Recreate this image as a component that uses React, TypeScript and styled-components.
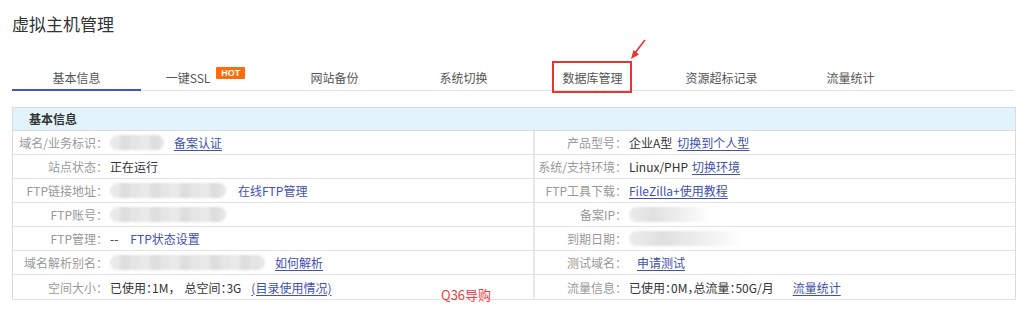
import React from 'react'
import styled, { createGlobalStyle } from 'styled-components'

const GlobalStyle = createGlobalStyle`
  html, body {
    margin: 0;
    padding: 0;
    background: #fff;
  }
  body {
    font-family: "Noto Sans CJK SC", "Liberation Sans", sans-serif;
    font-size: 12px;
    color: #333;
  }
`

type Value =
  | { kind: 'text'; text: string; gap?: number }
  | { kind: 'link'; text: string; underline?: boolean; gap?: number }
  | { kind: 'blur'; width: number; fade?: boolean; gap?: number }

type Row = {
  leftLabel: string
  left: Value[]
  rightLabel: string
  right: Value[]
}

const TABS = ['基本信息', '一键SSL', '网站备份', '系统切换', '数据库管理', '资源超标记录', '流量统计']

const ROWS: Row[] = [
  {
    leftLabel: '域名/业务标识：',
    left: [
      { kind: 'blur', width: 54 },
      { kind: 'link', text: '备案认证', underline: true, gap: 10 },
    ],
    rightLabel: '产品型号：',
    right: [
      { kind: 'text', text: '企业A型' },
      { kind: 'link', text: '切换到个人型', underline: true, gap: 5 },
    ],
  },
  {
    leftLabel: '站点状态：',
    left: [{ kind: 'text', text: '正在运行' }],
    rightLabel: '系统/支持环境：',
    right: [
      { kind: 'text', text: 'Linux/PHP' },
      { kind: 'link', text: '切换环境', underline: true, gap: 4 },
    ],
  },
  {
    leftLabel: 'FTP链接地址：',
    left: [
      { kind: 'blur', width: 116 },
      { kind: 'link', text: '在线FTP管理', gap: 12 },
    ],
    rightLabel: 'FTP工具下载：',
    right: [{ kind: 'link', text: 'FileZilla+使用教程', underline: true }],
  },
  {
    leftLabel: 'FTP账号：',
    left: [{ kind: 'blur', width: 116 }],
    rightLabel: '备案IP：',
    right: [{ kind: 'blur', width: 80, fade: true }],
  },
  {
    leftLabel: 'FTP管理：',
    left: [
      { kind: 'text', text: '--' },
      { kind: 'link', text: 'FTP状态设置', gap: 12 },
    ],
    rightLabel: '到期日期：',
    right: [{ kind: 'blur', width: 112, fade: true }],
  },
  {
    leftLabel: '域名解析别名：',
    left: [
      { kind: 'blur', width: 155 },
      { kind: 'link', text: '如何解析', underline: true, gap: 10 },
    ],
    rightLabel: '测试域名：',
    right: [{ kind: 'link', text: '申请测试', underline: true, gap: 8 }],
  },
  {
    leftLabel: '空间大小：',
    left: [
      { kind: 'text', text: '已使用：1M，' },
      { kind: 'text', text: '总空间：3G', gap: 10 },
      { kind: 'link', text: '(目录使用情况)', underline: true, gap: 10 },
    ],
    rightLabel: '流量信息：',
    right: [
      { kind: 'text', text: '已使用：0M，总流量：50G/月' },
      { kind: 'link', text: '流量统计', underline: true, gap: 19 },
    ],
  },
]

const App = (): React.ReactElement => {
  return (
    <>
      <GlobalStyle />
      <Page>
        <PageTitle>虚拟主机管理</PageTitle>

        {/* Tabs */}
        <TabBar>
          {TABS.map((tab, i) => (
            <Tab key={tab} active={i === 0}>
              <TabLabel>{tab}</TabLabel>
              {i === 1 && <HotBadge>HOT</HotBadge>}
            </Tab>
          ))}
        </TabBar>

        {/* Info table */}
        <InfoTable>
          <TableHeader>基本信息</TableHeader>
          {ROWS.map((row) => (
            <TableRow key={row.leftLabel}>
              <Half side="left">
                <Label side="left">{row.leftLabel}</Label>
                <ValueCell>{row.left.map(renderValue)}</ValueCell>
              </Half>
              <Half side="right">
                <Label side="right">{row.rightLabel}</Label>
                <ValueCell>{row.right.map(renderValue)}</ValueCell>
              </Half>
            </TableRow>
          ))}
        </InfoTable>

        {/* annotations over the screenshot */}
        <Watermark>Q36导购</Watermark>
        <Highlight />
        <Arrow width="20" height="24" viewBox="0 0 20 24">
          <line x1="16" y1="2" x2="6" y2="15" stroke="#e8332f" strokeWidth="1.6" />
          <polygon points="2,21 4.5,12 10,16.5" fill="#e8332f" />
        </Arrow>
      </Page>
    </>
  )
}

const renderValue = (v: Value, i: number): React.ReactNode => {
  const gap = v.gap ?? 0
  if (v.kind === 'blur') {
    return <Blurred key={i} width={v.width} fade={v.fade} gap={gap} />
  }
  if (v.kind === 'link') {
    return (
      <ValueLink key={i} underline={v.underline} gap={gap}>
        {v.text}
      </ValueLink>
    )
  }
  return (
    <ValueText key={i} gap={gap}>
      {v.text}
    </ValueText>
  )
}

export default App

const Page = styled.div`
  position: relative;
  width: 1024px;
  height: 321px;
  padding: 12px 10px 0 12px;
  box-sizing: border-box;
  overflow: hidden;
`

const PageTitle = styled.h1`
  margin: 0;
  font-size: 17px;
  line-height: 24px;
  font-weight: normal;
  color: #333;
`

const TabBar = styled.div`
  display: flex;
  margin-top: 26px;
  border-bottom: 1px solid #e3e3e3;
`

const Tab = styled.div.withConfig({ shouldForwardProp: (p) => p !== 'active' })<{ active?: boolean }>`
  display: flex;
  justify-content: center;
  align-items: flex-start;
  width: 129px;
  height: 29px;
  padding-top: 8px;
  box-sizing: border-box;
  margin-bottom: -1px;
  border-bottom: 2px solid ${(p) => (p.active ? '#4355c2' : 'transparent')};
  color: #555;
  font-size: 12px;
  line-height: 16px;
`

const TabLabel = styled.span`
  white-space: nowrap;
`

const HotBadge = styled.span`
  margin-left: 6px;
  margin-top: -3px;
  height: 12px;
  padding: 0 5px;
  background: #ff6a0b;
  color: #fff;
  font-family: "Liberation Sans", sans-serif;
  font-weight: bold;
  font-size: 9px;
  line-height: 12px;
  border-radius: 1px;
`

const InfoTable = styled.div`
  margin-top: 16px;
  width: 1002px;
  border: 1px solid #dcdcdc;
  border-bottom-color: #e3e3e3;
`

const TableHeader = styled.div`
  height: 23px;
  box-sizing: border-box;
  line-height: 22px;
  padding-left: 16px;
  background: #e2f3fb;
  border-bottom: 1px solid #dcdcdc;
  font-weight: bold;
  color: #333;
`

const TableRow = styled.div`
  display: grid;
  grid-template-columns: 522px 1fr;
  height: 24px;
  box-sizing: border-box;
  border-bottom: 1px solid #e3e3e3;

  &:last-child {
    border-bottom: none;
  }
`

const Half = styled.div<{ side: 'left' | 'right' }>`
  display: flex;
  align-items: center;
  border-right: ${(p) => (p.side === 'left' ? '2px solid #e8e8e8' : 'none')};
`

const Label = styled.div<{ side: 'left' | 'right' }>`
  flex: 0 0 ${(p) => (p.side === 'left' ? '95px' : '92px')};
  text-align: right;
  color: #999;
  white-space: nowrap;
`

const ValueCell = styled.div`
  display: flex;
  align-items: center;
  padding-left: 2px;
  white-space: nowrap;
  font-feature-settings: "halt";
`

const ValueText = styled.span<{ gap: number }>`
  margin-left: ${(p) => p.gap}px;
  color: #333;
`

const ValueLink = styled.a.withConfig({ shouldForwardProp: (p) => p !== 'underline' && p !== 'gap' })<{
  underline?: boolean
  gap: number
}>`
  margin-left: ${(p) => p.gap}px;
  color: #4150b5;
  text-decoration: ${(p) => (p.underline ? 'underline' : 'none')};
  text-underline-offset: 2px;
  cursor: pointer;
`

const Blurred = styled.span.withConfig({ shouldForwardProp: (p) => !['width', 'fade', 'gap'].includes(p) })<{
  width: number
  fade?: boolean
  gap: number
}>`
  display: inline-block;
  margin-left: ${(p) => p.gap}px;
  width: ${(p) => p.width}px;
  height: 15px;
  border-radius: 8px;
  background: ${(p) =>
    p.fade
      ? 'linear-gradient(90deg, #ececec 0%, #e0e0e0 30%, #ececec 60%, #f7f7f7 85%, #fff 100%)'
      : 'repeating-linear-gradient(90deg, #e9e9e9 0px, #e9e9e9 10px, #dedede 10px, #dedede 20px, #e5e5e5 20px, #e5e5e5 30px)'};
  filter: blur(0.8px);
`

const Watermark = styled.div`
  position: absolute;
  left: 441px;
  top: 286px;
  color: #f23b3b;
  font-size: 13px;
  line-height: 18px;
`

const Highlight = styled.div`
  position: absolute;
  left: 552px;
  top: 61px;
  width: 80px;
  height: 32px;
  box-sizing: border-box;
  border: 2px solid #e8332f;
`

const Arrow = styled.svg`
  position: absolute;
  left: 629px;
  top: 38px;
`
